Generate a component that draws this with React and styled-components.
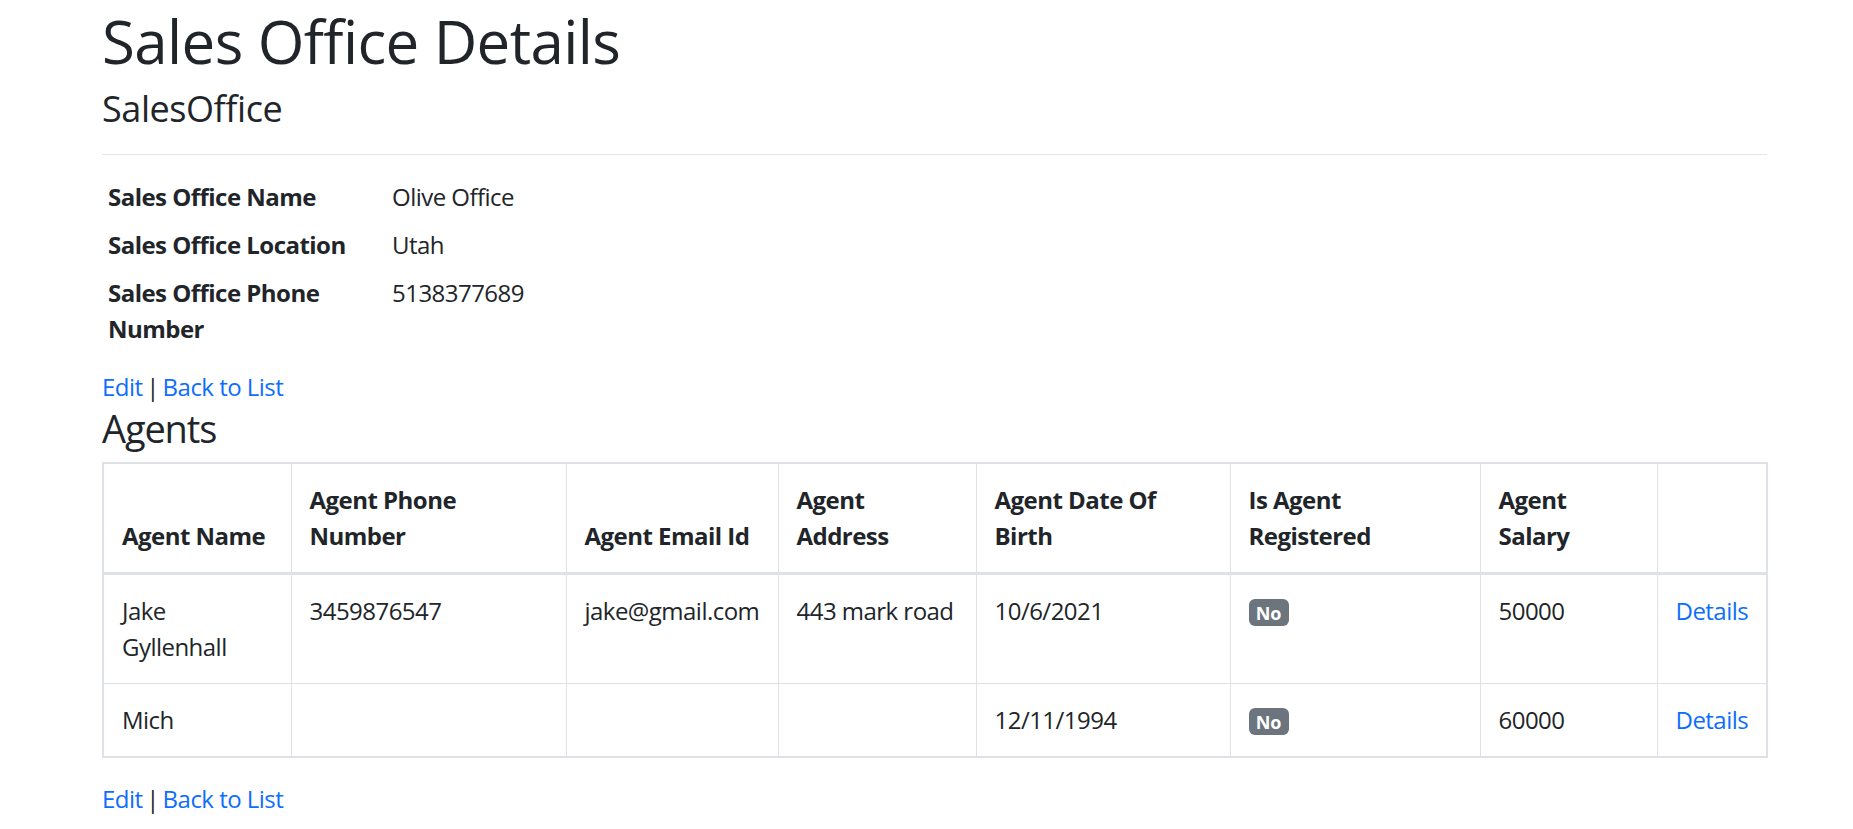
import React from "react";
import styled, { createGlobalStyle } from "styled-components";

const Global = createGlobalStyle`
  html, body { margin: 0; padding: 0; background: #fff; }
  body {
    font-family: "Open Sans", "Noto Sans", sans-serif;
    font-size: 24px;
    line-height: 36px;
    letter-spacing: -0.022em;
    color: #212529;
  }
  * { box-sizing: border-box; }
`;

const Container = styled.div`
  width: 1665px;
  margin-left: 102px;
  padding-top: 5px;
`;

const Title = styled.h1`
  font-size: 60px;
  font-weight: 500;
  line-height: 72px;
  letter-spacing: -0.01em;
  margin: 0 0 10px;
`;

const Subtitle = styled.h4`
  font-size: 36px;
  font-weight: 500;
  line-height: 43.2px;
  letter-spacing: -0.012em;
  margin: 0 0 12px;
`;

const Rule = styled.hr`
  border: 0;
  border-top: 1px solid rgba(0, 0, 0, 0.1);
  margin: 24px 0;
  height: 0;
`;

const DetailList = styled.dl`
  display: grid;
  grid-template-columns: 284px 1fr;
  margin: 0 0 22px;
  padding-left: 6px;
`;

const Term = styled.dt`
  font-weight: 700;
  margin: 0;
  padding-right: 10px;
`;

const Value = styled.dd`
  margin: 0 0 12px;
`;

const LinkRow = styled.div`
  margin: 0;
`;

const Link = styled.a`
  color: #0d6efd;
  text-decoration: none;
  cursor: pointer;
`;

const Separator = styled.span`
  margin: 0 -2px;
`;

const Section = styled.h3`
  font-size: 38px;
  font-weight: 500;
  line-height: 40px;
  letter-spacing: -0.03em;
  margin: 3px 0 13.5px;
`;

const Table = styled.table`
  width: 100%;
  border-collapse: collapse;
  table-layout: fixed;
  border: 2px solid #dee2e6;
  margin-bottom: 23px;
`;

const Col = styled.col`
  width: ${(p) => p.$w}px;
`;

const HeadCell = styled.th`
  text-align: left;
  vertical-align: bottom;
  font-weight: 700;
  padding: 18px;
  border: 1px solid #dee2e6;
  border-bottom: 3px solid #dee2e6;
  line-height: 36px;
`;

const Cell = styled.td`
  vertical-align: top;
  padding: 18px;
  border: 1px solid #dee2e6;
  line-height: 36px;
`;

const Badge = styled.span`
  display: inline-block;
  padding: 4.5px 7.2px;
  font-size: 18px;
  font-weight: 700;
  line-height: 1;
  letter-spacing: 0;
  color: #fff;
  background: #6c757d;
  border-radius: 6px;
  vertical-align: baseline;
`;

const details = [
  ["Sales Office Name", "Olive Office"],
  ["Sales Office Location", "Utah"],
  ["Sales Office Phone Number", "5138377689"],
];

const columns = [
  ["Agent Name", 188],
  ["Agent Phone Number", 275],
  ["Agent Email Id", 212],
  ["Agent Address", 198],
  ["Agent Date Of Birth", 254],
  ["Is Agent Registered", 250],
  ["Agent Salary", 177],
  ["", 110],
];

const agents = [
  {
    name: "Jake Gyllenhall",
    phone: "3459876547",
    email: "jake@gmail.com",
    address: "443 mark road",
    dob: "10/6/2021",
    salary: "50000",
  },
  { name: "Mich", phone: "", email: "", address: "", dob: "12/11/1994", salary: "60000" },
];

function Links() {
  return (
    <LinkRow>
      <Link>Edit</Link>
      <Separator> | </Separator>
      <Link>Back to List</Link>
    </LinkRow>
  );
}

export default function App() {
  return (
    <>
      <Global />
      <Container>
        <Title>Sales Office Details</Title>
        <Subtitle>SalesOffice</Subtitle>
        <Rule />
        <DetailList>
          {details.map(([k, v]) => (
            <React.Fragment key={k}>
              <Term>{k}</Term>
              <Value>{v}</Value>
            </React.Fragment>
          ))}
        </DetailList>
        <Links />
        <Section>Agents</Section>
        <Table>
          <colgroup>
            {columns.map(([h, w], i) => (
              <Col key={i} $w={w} />
            ))}
          </colgroup>
          <thead>
            <tr>
              {columns.map(([h], i) => (
                <HeadCell key={i}>{h}</HeadCell>
              ))}
            </tr>
          </thead>
          <tbody>
            {agents.map((a) => (
              <tr key={a.name}>
                <Cell>{a.name}</Cell>
                <Cell>{a.phone}</Cell>
                <Cell>{a.email}</Cell>
                <Cell>{a.address}</Cell>
                <Cell>{a.dob}</Cell>
                <Cell>
                  <Badge>No</Badge>
                </Cell>
                <Cell>{a.salary}</Cell>
                <Cell>
                  <Link>Details</Link>
                </Cell>
              </tr>
            ))}
          </tbody>
        </Table>
        <Links />
      </Container>
    </>
  );
}
